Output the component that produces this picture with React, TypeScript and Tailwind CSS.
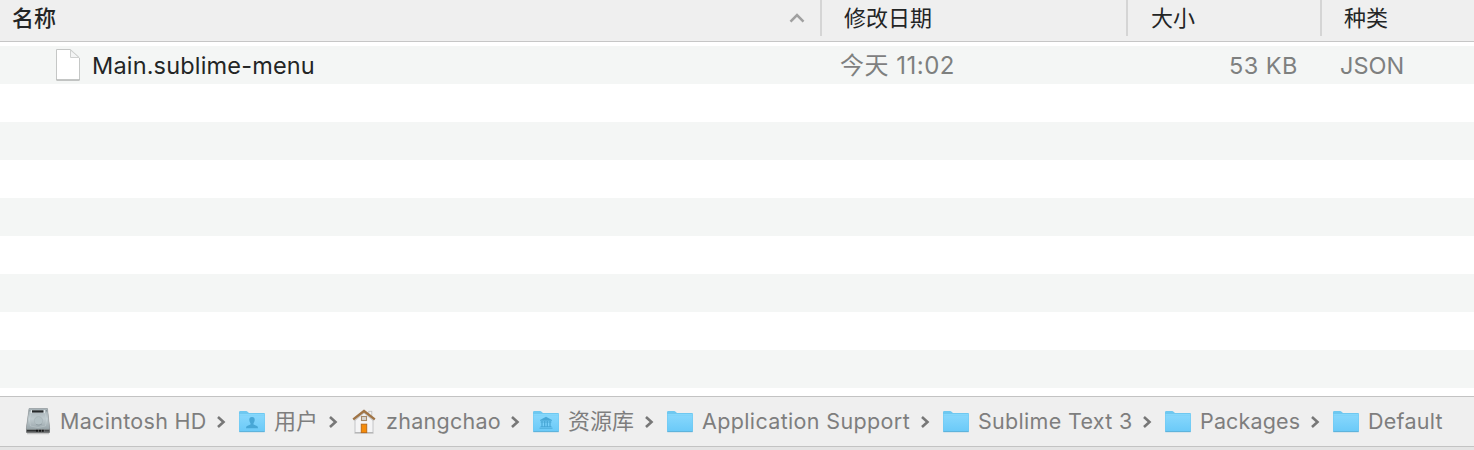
import React from "react";

type IconKind = "disk" | "folder" | "users" | "home" | "library";

const columns = [
  { label: "修改日期", width: "w-[306px] pl-[22px]" },
  { label: "大小", width: "w-[194px] pl-[23px]" },
  { label: "种类", width: "w-[154px] pl-[22px]" },
];

const path: { label: string; icon: IconKind; width: string; text: string }[] = [
  { label: "Macintosh HD", icon: "disk", width: "w-[214px]", text: "tracking-[0.3px]" },
  { label: "用户", icon: "users", width: "w-[112px]", text: "text-[22px]" },
  { label: "zhangchao", icon: "home", width: "w-[182px]", text: "tracking-[0.27px]" },
  { label: "资源库", icon: "library", width: "w-[134px]", text: "text-[22px]" },
  { label: "Application Support", icon: "folder", width: "w-[276px]", text: "tracking-[0.36px]" },
  { label: "Sublime Text 3", icon: "folder", width: "w-[222px]", text: "tracking-[0.3px]" },
  { label: "Packages", icon: "folder", width: "w-[168px]", text: "tracking-[0.15px]" },
  { label: "Default", icon: "folder", width: "w-[142px]", text: "tracking-[0.27px]" },
];

function DiskIcon() {
  return (
    <svg width="28" height="32" viewBox="0 0 28 32">
      <defs>
        <linearGradient id="disk-top" x1="0" y1="0" x2="0" y2="1">
          <stop offset="0" stopColor="#a5b0b5" />
          <stop offset="0.5" stopColor="#c0cbcf" />
          <stop offset="1" stopColor="#98a4a9" />
        </linearGradient>
      </defs>
      <path d="M3 27.5H25" stroke="#000" strokeOpacity=".18" strokeWidth="1.5" />
      <path d="M5 2.5H23.5L26 23V26Q26 27 25 27H3Q2 27 2 26V23Z" fill="#77797a" />
      <path d="M5 2.5H23.5L25.7 23.2H2.3Z" fill="url(#disk-top)" stroke="#98a1a5" strokeWidth=".5" />
      <path d="M7 7Q14 4.5 21 7Q24 14 21.5 20Q14 23 6.5 20Q4 14 7 7Z" fill="none" stroke="#dce4e6" strokeOpacity=".35" strokeWidth=".8" />
      <rect x="6.5" y="4" width="14.5" height="3" fill="#dbe3e5" />
      <rect x="8" y="4.3" width="11.5" height="2.3" fill="#25292b" />
      <circle cx="14.5" cy="14.8" r="4.2" fill="#b4c1c5" stroke="#a4b0b4" strokeWidth=".6" />
      <path d="M12 18.5Q15 20 18 18" stroke="#87949a" fill="none" strokeWidth=".7" />
      <path d="M3 24.7H12" stroke="#303233" strokeWidth="1.6" />
      <path d="M12 24.7H20" stroke="#141516" strokeWidth="2" strokeDasharray="2.2 .6" />
      <path d="M20.5 24.7H25" stroke="#4a4d4e" strokeWidth="1.6" />
      <circle cx="6" cy="4.8" r=".6" fill="#737d81" />
      <circle cx="22.5" cy="4.8" r=".6" fill="#737d81" />
    </svg>
  );
}

function HomeIcon() {
  return (
    <svg width="28" height="32" viewBox="0 0 28 32">
      <rect x="18.8" y="5.3" width="3" height="5.5" fill="#f4f4f4" stroke="#bbb" strokeWidth=".8" />
      <path d="M5 13.5L14 6L23 13.5V26.5H5Z" fill="#f4f4f5" stroke="#b9babc" strokeWidth=".8" />
      <path d="M4.5 27H23.5" stroke="#a6a6a6" strokeWidth=".9" />
      <path d="M3.7 13.9L14 5.6L24.3 13.9" fill="none" stroke="#c9c9c9" strokeWidth="3.2" />
      <path d="M3.2 13.3L14 5L24.8 13.3" fill="none" stroke="#a07445" strokeWidth="2.3" />
      <rect x="11.5" y="10.5" width="5" height="4" fill="#d8d6d2" stroke="#a68a69" strokeWidth="1.1" />
      <rect x="11.3" y="18.2" width="5.4" height="8.4" fill="#f68c09" stroke="#bd6c18" strokeWidth="1" />
    </svg>
  );
}

function FolderIcon({ kind }: { kind: IconKind }) {
  return (
    <svg width="28" height="32" viewBox="0 0 28 32">
      <defs>
        <linearGradient id={"face-" + kind} x1="0" y1="0" x2="0" y2="1">
          <stop offset="0" stopColor="#87d7fc" />
          <stop offset="1" stopColor="#6bcaf8" />
        </linearGradient>
      </defs>
      <path d="M1 6.2Q1 5 2.2 5H8.2Q9 5 9.6 5.7L11 7H26Q27 7 27 8V25Q27 26 26 26H2Q1 26 1 25Z" fill="#6fc8f0" />
      <path d="M1.5 9.3H26.5V24.4Q26.5 25 25.8 25H2.2Q1.5 25 1.5 24.4Z" fill={"url(#face-" + kind + ")"} />
      <path d="M1.5 8.5H26.5" stroke="#8bdcff" strokeWidth=".8" />
      <path d="M1.3 25.7H26.7" stroke="#58a9d0" strokeWidth=".8" />
      {kind === "users" && (
        <path
          d="M14 11C11.8 11 11.2 12.4 11.3 14C11.4 15.8 12.2 16.6 12.5 17.2V18.5L9 20Q8 20.5 8 22.2H20Q20 20.5 19 20L15.5 18.5V17.2C15.8 16.6 16.6 15.8 16.7 14C16.8 12.4 16.2 11 14 11Z"
          fill="#48a7d6"
        />
      )}
      {kind === "library" && (
        <g fill="none" stroke="#48a7d6">
          <path d="M8 14L14 10.8L20 14V14.7H8Z" fill="#48a7d6" stroke="none" />
          <path d="M10 15V21M12.7 15V21M15.3 15V21M18 15V21" strokeWidth="1.2" />
          <path d="M8.5 16H19.5M8.5 20.7H19.5M7.5 22.2H20.5" strokeWidth=".9" />
        </g>
      )}
    </svg>
  );
}

function PathIcon({ kind }: { kind: IconKind }) {
  if (kind === "disk") return <DiskIcon />;
  if (kind === "home") return <HomeIcon />;
  return <FolderIcon kind={kind} />;
}

export default function App() {
  return (
    <div className="flex h-[450px] w-[1474px] flex-col overflow-hidden bg-white font-['Inter','Noto_Sans_CJK_SC',sans-serif] text-[#232525]">
      <header className="flex h-[42px] shrink-0 border-b border-[#c6c6c6] bg-[#efefef] text-[22px] leading-[36px]">
        <div className="flex w-[820px] justify-between pr-[15px] pl-3">
          <span className="font-medium">名称</span>
          <svg className="mt-[11px]" width="16" height="14" viewBox="0 0 16 14" fill="none" stroke="#a0a0a0" strokeWidth="2.6">
            <path d="M1.5 10.7L8 4.2L14.5 10.7" />
          </svg>
        </div>
        {columns.map((column) => (
          <div key={column.label} className={"h-9 border-l-2 border-[#d5d5d5] " + column.width}>
            {column.label}
          </div>
        ))}
      </header>

      <main className="flex h-[354px] shrink-0 flex-col pt-1">
        <div className="flex h-[38px] shrink-0 items-center bg-[#f4f6f5] text-[23.5px] leading-[36px] text-[#7e807f]">
          <div className="flex w-[840px] items-center pl-[54px]">
            <svg width="28" height="38" viewBox="0 0 28 38">
              <path d="M2.5 3.5H16.5L25.5 12V34H2.5Z" fill="#fff" stroke="#c5c7c6" strokeWidth="1" />
              <path d="M2.5 34H25.5" stroke="#a6a8a7" strokeWidth="1" />
              <path d="M16.5 4V11.5H25Z" fill="#f4f5f5" stroke="#cfd1d0" strokeWidth="1" />
            </svg>
            <span className="pt-0.5 pl-2.5 tracking-[0.17px] text-[#232525]">Main.sublime-menu</span>
          </div>
          <span className="w-[260px] pt-0.5 text-[24px] tracking-[0.5px]">今天 11:02</span>
          <span className="w-[198px] pt-0.5 text-right tracking-[0.5px]">53 KB</span>
          <span className="pt-0.5 pl-[42px]">JSON</span>
        </div>
        {[0, 1, 2, 3].map((row) => (
          <div key={row} className="flex shrink-0 flex-col">
            <div className="h-[38px] bg-white" />
            <div className="h-[38px] bg-[#f4f6f5]" />
          </div>
        ))}
      </main>

      <footer className="flex h-[51px] shrink-0 items-center border-y border-[#c3c3c3] bg-[#efefef] pl-6 text-[21.5px] text-[#7e7e7e]">
        {path.map((item, index) => (
          <div key={item.label} className={"flex shrink-0 items-center " + item.width}>
            <PathIcon kind={item.icon} />
            <span className={"pl-2 whitespace-nowrap " + item.text}>{item.label}</span>
            {index < path.length - 1 && (
              <svg className="mr-[11px] ml-auto shrink-0" width="12" height="16" viewBox="0 0 12 16" fill="none" stroke="#777" strokeWidth="2.6">
                <path d="M3 3L8.5 8L3 13" />
              </svg>
            )}
          </div>
        ))}
      </footer>
      <div className="h-[3px] shrink-0 bg-[#e4e4e4]" />
    </div>
  );
}
